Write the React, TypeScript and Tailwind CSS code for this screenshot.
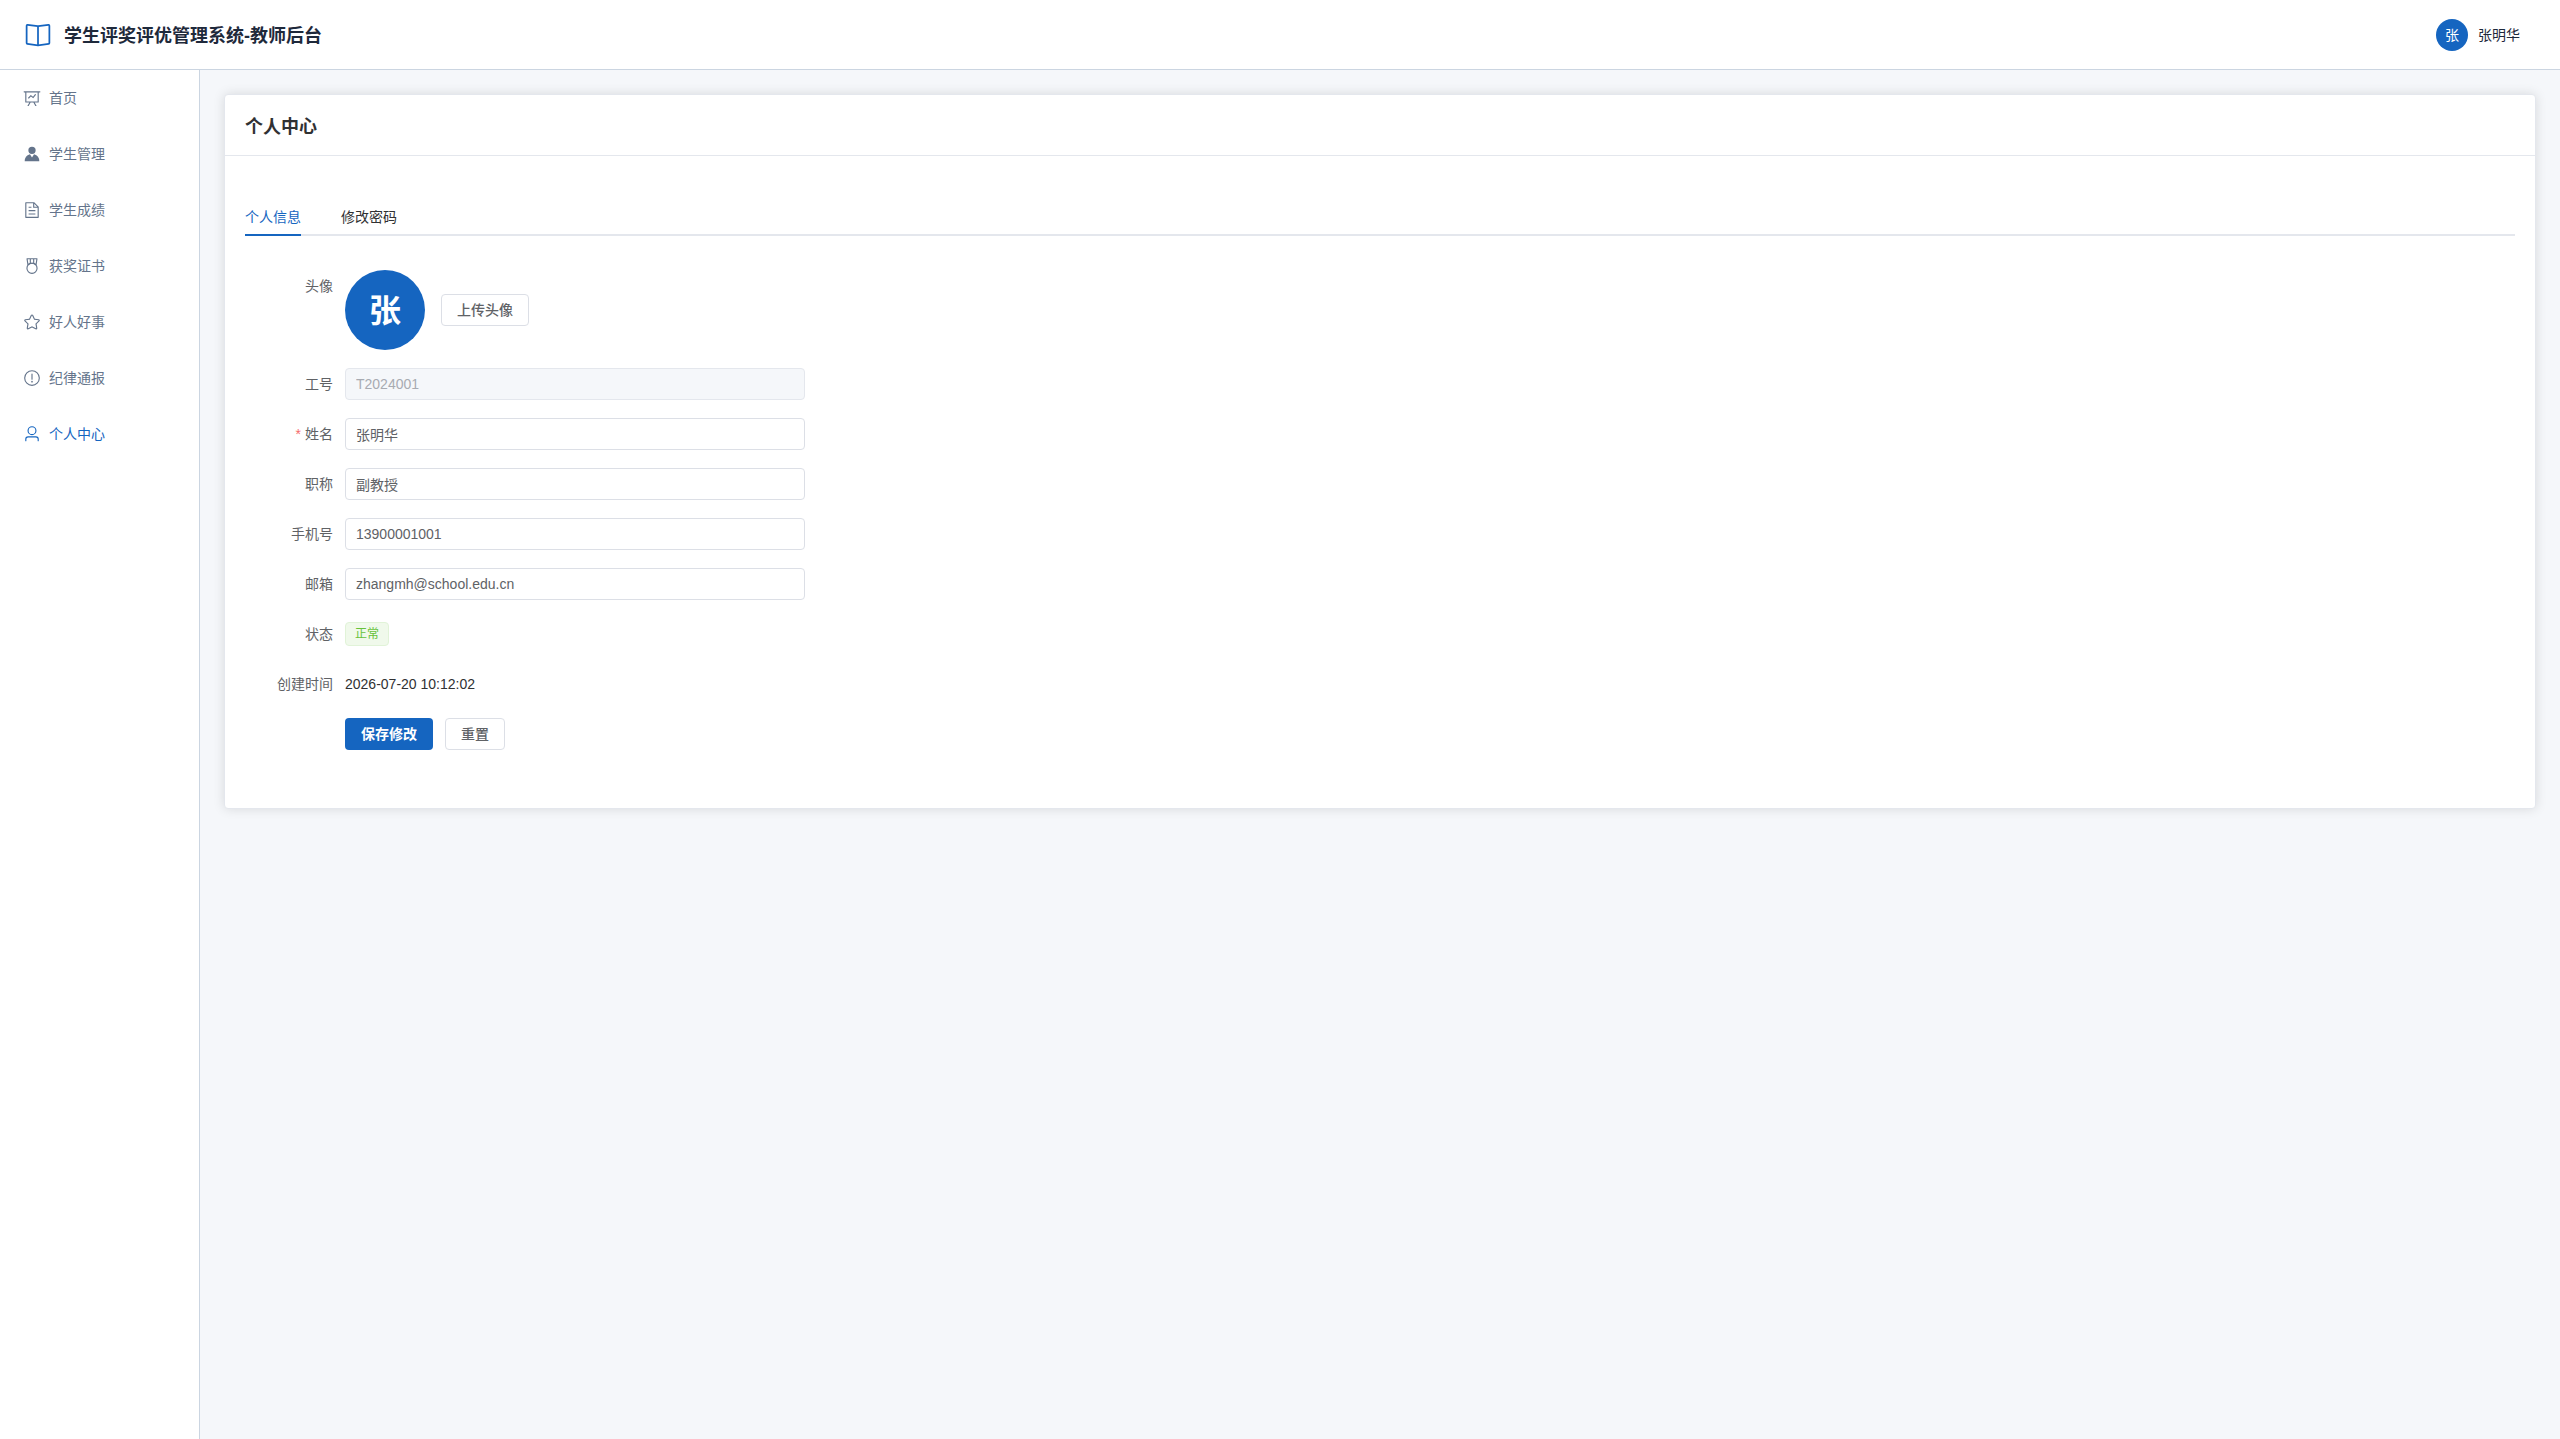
import { useState } from "react";
import type { ReactNode } from "react";

// Icons, all on a 1024 grid
const icons = {
  reading: [
    "m512 863.36 384-54.848v-638.72L525.568 222.72a96 96 0 0 1-27.136 0L128 169.792v638.72zM137.024 106.432l370.432 52.928a32 32 0 0 0 9.088 0l370.432-52.928A64 64 0 0 1 960 169.792v638.72a64 64 0 0 1-54.976 63.36l-388.48 55.488a32 32 0 0 1-9.088 0l-388.48-55.488A64 64 0 0 1 64 808.512v-638.72a64 64 0 0 1 73.024-63.36",
    "M480 192h64v704h-64z",
  ],
  dataLine: [
    "M359.168 768H160a32 32 0 0 1-32-32V192H64a32 32 0 0 1 0-64h896a32 32 0 1 1 0 64h-64v544a32 32 0 0 1-32 32H665.216l110.848 192h-73.856L591.36 768H433.024L322.176 960H248.32zM832 192H192v512h640zM342.656 534.656a32 32 0 1 1-45.312-45.312L444.992 341.76l125.44 94.08L679.04 300.032a32 32 0 1 1 49.92 39.936L581.632 524.224 451.008 426.24z",
  ],
  avatar: [
    "M628.736 528.896A416 416 0 0 1 928 928H96a415.87 415.87 0 0 1 299.264-399.104L512 704zM720 304a208 208 0 1 1-416 0 208 208 0 0 1 416 0",
  ],
  document: [
    "M832 384H576V128H192v768h640zm-26.496-64L640 154.496V320zM160 64h480l256 256v608a32 32 0 0 1-32 32H160a32 32 0 0 1-32-32V96a32 32 0 0 1 32-32m160 448h384v64H320zm0-192h160v64H320zm0 384h384v64H320z",
  ],
  medal: [
    "M512 896a256 256 0 1 0 0-512 256 256 0 0 0 0 512m0 64a320 320 0 1 1 0-640 320 320 0 0 1 0 640",
    "M576 128H448v200a286.7 286.7 0 0 1 64-8c19.52 0 40.832 2.688 64 8zm64 0v219.648c24.448 9.088 50.56 20.416 78.4 33.92L757.44 128zm-256 0H266.624l39.04 253.568c27.84-13.504 53.888-24.832 78.336-33.92zM229.312 64h565.376a32 32 0 0 1 31.616 36.864L768 480c-113.792-64-199.104-96-256-96s-142.208 32-256 96l-58.304-379.136A32 32 0 0 1 229.312 64",
  ],
  star: [
    "m512 747.84 228.16 119.936a6.4 6.4 0 0 0 9.28-6.72l-43.52-254.08 184.512-179.904a6.4 6.4 0 0 0-3.52-10.88l-255.104-37.12L517.76 147.904a6.4 6.4 0 0 0-11.52 0L392.192 379.072l-255.104 37.12a6.4 6.4 0 0 0-3.52 10.88L318.08 606.976l-43.584 254.08a6.4 6.4 0 0 0 9.28 6.72zM313.6 924.48a70.4 70.4 0 0 1-102.144-74.24l37.888-220.928L88.96 472.96A70.4 70.4 0 0 1 128 352.896l221.76-32.256 99.2-200.96a70.4 70.4 0 0 1 126.208 0l99.2 200.96 221.824 32.256a70.4 70.4 0 0 1 39.04 120.064L774.72 629.376l37.888 220.928a70.4 70.4 0 0 1-102.144 74.24L512 820.096l-198.4 104.32z",
  ],
  warning: [
    "M512 64a448 448 0 1 1 0 896 448 448 0 0 1 0-896m0 832a384 384 0 0 0 0-768 384 384 0 0 0 0 768m48-176a48 48 0 1 1-96 0 48 48 0 0 1 96 0m-48-464a32 32 0 0 1 32 32v288a32 32 0 0 1-64 0V288a32 32 0 0 1 32-32",
  ],
  user: [
    "M512 512a192 192 0 1 0 0-384 192 192 0 0 0 0 384m0 64a256 256 0 1 1 0-512 256 256 0 0 1 0 512m320 320v-96a96 96 0 0 0-96-96H288a96 96 0 0 0-96 96v96a32 32 0 1 1-64 0v-96a160 160 0 0 1 160-160h448a160 160 0 0 1 160 160v96a32 32 0 1 1-64 0",
  ],
};

type IconName = keyof typeof icons;

function Icon({ name, className }: Readonly<{ name: IconName; className: string }>) {
  return (
    <svg viewBox="0 0 1024 1024" fill="currentColor" className={className} aria-hidden="true">
      {icons[name].map((d) => (
        <path key={d} d={d} />
      ))}
    </svg>
  );
}

const menu: { icon: IconName; label: string; path: string }[] = [
  { icon: "dataLine", label: "首页", path: "#/home" },
  { icon: "avatar", label: "学生管理", path: "#/students" },
  { icon: "document", label: "学生成绩", path: "#/scores" },
  { icon: "medal", label: "获奖证书", path: "#/certificates" },
  { icon: "star", label: "好人好事", path: "#/deeds" },
  { icon: "warning", label: "纪律通报", path: "#/discipline" },
  { icon: "user", label: "个人中心", path: "#/profile" },
];

const initialForm = {
  name: "张明华",
  title: "副教授",
  phone: "13900001001",
  email: "zhangmh@school.edu.cn",
};

interface FormRowProps {
  label?: string;
  htmlFor?: string;
  required?: boolean;
  children: ReactNode;
}

function FormRow({ label, htmlFor, required, children }: Readonly<FormRowProps>) {
  return (
    <div className="flex mb-[18px]">
      <div className="w-[100px] shrink-0 pr-3 text-right leading-8 text-[#606266]">
        {required && <span className="mr-1 text-[#f56c6c]">*</span>}
        {label && <label htmlFor={htmlFor}>{label}</label>}
      </div>
      <div className="flex flex-1 items-center min-h-8">{children}</div>
    </div>
  );
}

interface TextFieldProps {
  id: string;
  value: string;
  disabled?: boolean;
  onChange?: (value: string) => void;
}

function TextField({ id, value, disabled, onChange }: Readonly<TextFieldProps>) {
  return (
    <input
      id={id}
      type="text"
      value={value}
      disabled={disabled}
      onChange={(e) => onChange?.(e.target.value)}
      className="w-full h-8 px-2.5 rounded border border-[#dcdfe6] bg-white leading-[30px] text-[#606266] outline-none
        focus:border-[#1565c0] disabled:border-[#e4e7ed] disabled:bg-[#f5f7fa] disabled:text-[#a8abb2]"
    />
  );
}

export default function App() {
  const [form, setForm] = useState(initialForm);
  const update = (key: keyof typeof initialForm) => (value: string) =>
    setForm({ ...form, [key]: value });

  return (
    <div className="flex flex-col min-h-screen bg-[#f5f7fa] text-sm text-[#303133] font-['Liberation_Sans','Noto_Sans_CJK_SC',sans-serif]">
      {/* Top bar */}
      <header className="flex items-center justify-between h-[70px] pl-6 pr-10 bg-white border-b border-[#cbd5e1]">
        <div className="flex items-center gap-3">
          <Icon name="reading" className="size-7 text-[#1565c0]" />
          <h1 className="pt-0.5 text-lg font-bold text-[#1e293b]">学生评奖评优管理系统-教师后台</h1>
        </div>
        <button type="button" className="flex items-center gap-2.5 text-[#1e293b]">
          <span className="flex items-center justify-center size-8 rounded-full bg-[#1565c0] text-white">
            张
          </span>
          <span>张明华</span>
        </button>
      </header>

      <div className="flex flex-1">
        {/* Side menu */}
        <nav className="w-[200px] shrink-0 bg-white border-r border-[#cbd5e1]">
          {menu.map((item) => (
            <a
              key={item.path}
              href={item.path}
              className={`flex items-center gap-2 h-14 pl-[23px] ${
                item.icon === "user" ? "text-[#1565c0]" : "text-[#64748b]"
              }`}
            >
              <Icon name={item.icon} className="size-[18px]" />
              <span>{item.label}</span>
            </a>
          ))}
        </nav>

        <main className="flex-1 p-6">
          <section className="bg-white border border-[#e4e7ed] rounded shadow-[0_0_12px_rgba(0,0,0,0.12)]">
            <div className="px-5 pt-5 pb-4 border-b border-[#e4e7ed]">
              <h2 className="text-lg leading-6 font-bold">个人中心</h2>
            </div>

            <div className="px-5 py-10">
              {/* Tabs */}
              <div role="tablist" className="flex gap-10 border-b-2 border-[#e4e7ed]">
                <button
                  type="button"
                  role="tab"
                  aria-selected="true"
                  className="h-10 -mb-0.5 pt-1 border-b-2 border-[#1565c0] text-[#1565c0]"
                >
                  个人信息
                </button>
                <button
                  type="button"
                  role="tab"
                  aria-selected="false"
                  className="h-10 -mb-0.5 pt-1 border-b-2 border-transparent"
                >
                  修改密码
                </button>
              </div>

              <form className="max-w-[560px] mt-[34px]" onSubmit={(e) => e.preventDefault()}>
                <FormRow label="头像" htmlFor="upload">
                  <div className="flex items-center gap-4">
                    <span className="flex items-center justify-center size-20 pt-1 rounded-full bg-[#1565c0] text-[32px] font-bold text-white">
                      张
                    </span>
                    <button
                      id="upload"
                      type="button"
                      className="h-8 px-[15px] rounded border border-[#dcdfe6] bg-white font-medium text-[#606266]"
                    >
                      上传头像
                    </button>
                  </div>
                </FormRow>
                <FormRow label="工号" htmlFor="staffNo">
                  <TextField id="staffNo" value="T2024001" disabled />
                </FormRow>
                <FormRow label="姓名" htmlFor="name" required>
                  <TextField id="name" value={form.name} onChange={update("name")} />
                </FormRow>
                <FormRow label="职称" htmlFor="title">
                  <TextField id="title" value={form.title} onChange={update("title")} />
                </FormRow>
                <FormRow label="手机号" htmlFor="phone">
                  <TextField id="phone" value={form.phone} onChange={update("phone")} />
                </FormRow>
                <FormRow label="邮箱" htmlFor="email">
                  <TextField id="email" value={form.email} onChange={update("email")} />
                </FormRow>
                <FormRow label="状态" htmlFor="status">
                  <output
                    id="status"
                    className="flex items-center h-6 px-[9px] rounded border border-[#e1f3d8] bg-[#f0f9eb] text-xs text-[#67c23a]"
                  >
                    正常
                  </output>
                </FormRow>
                <FormRow label="创建时间" htmlFor="createdAt">
                  <output id="createdAt">2026-07-20 10:12:02</output>
                </FormRow>
                <FormRow>
                  <div className="flex gap-3">
                    <button
                      type="submit"
                      className="h-8 px-4 rounded bg-[#1565c0] font-bold text-white"
                    >
                      保存修改
                    </button>
                    <button
                      type="button"
                      onClick={() => setForm(initialForm)}
                      className="h-8 px-[15px] rounded border border-[#dcdfe6] bg-white font-medium text-[#606266]"
                    >
                      重置
                    </button>
                  </div>
                </FormRow>
              </form>
            </div>
          </section>
        </main>
      </div>
    </div>
  );
}
